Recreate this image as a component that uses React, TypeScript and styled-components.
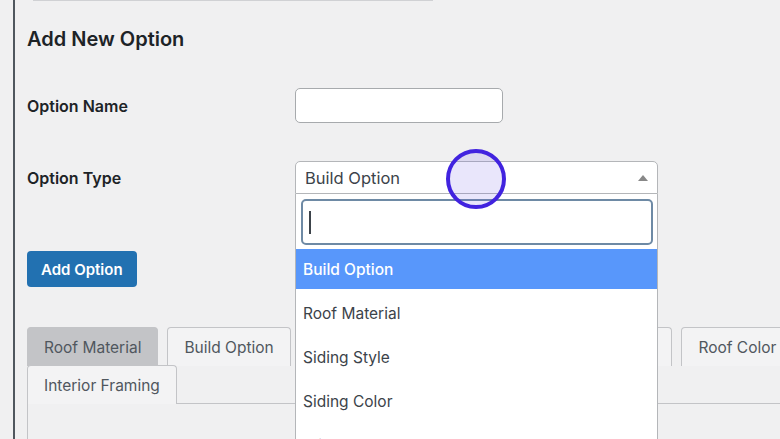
import React from 'react'
import styled, { createGlobalStyle } from 'styled-components'

const GlobalStyle = createGlobalStyle`
  html, body {
    margin: 0;
    padding: 0;
    background: #f0f0f1;
    overflow: hidden;
  }
  body {
    font-family: Inter, 'Noto Sans', 'Liberation Sans', sans-serif;
    color: #1d2327;
  }
`

const Page = styled.div`
  display: flex;
  width: 780px;
  height: 439px;
  overflow: hidden;
`

const LeftRail = styled.div`
  width: 13px;
  flex: none;
  border-right: 2px solid #50575e;
`

const Main = styled.div`
  flex: 1;
  padding-left: 12px;
  min-width: 0;
`

const TopEdge = styled.div`
  width: 400px;
  margin-left: 6px;
  height: 0;
  border-bottom: 1px solid #d0d1d4;
`

const Heading = styled.h2`
  margin: 26px 0 0;
  font-size: 20px;
  line-height: 24px;
  font-weight: 600;
  color: #1d2327;
`

const FormGrid = styled.div`
  display: grid;
  grid-template-columns: 268px 363px;
  row-gap: 38px;
  align-items: center;
  margin-top: 37px;
`

const Label = styled.label`
  font-size: 16px;
  font-weight: 600;
  color: #1d2327;
`

const TextInput = styled.div`
  width: 208px;
  height: 35px;
  box-sizing: border-box;
  background: #fff;
  border: 1px solid #a7aaad;
  border-radius: 5px;
`

const SelectWrap = styled.div`
  position: relative;
  width: 363px;
`

const SelectBox = styled.div`
  height: 33px;
  box-sizing: border-box;
  background: #fff;
  border: 1px solid #b4b6b9;
  border-radius: 5px 5px 0 0;
  display: flex;
  align-items: center;
  justify-content: space-between;
  padding: 0 9px 0 9px;
  font-size: 16.5px;
  color: #3c434a;
`

const Caret = styled.span`
  width: 0;
  height: 0;
  border-left: 5px solid transparent;
  border-right: 5px solid transparent;
  border-bottom: 6px solid #888;
`

const Dropdown = styled.div`
  position: absolute;
  top: 100%;
  left: 0;
  right: 0;
  height: 260px;
  box-sizing: border-box;
  background: #fff;
  border: 1px solid #b4b6b9;
  border-top: none;
  z-index: 5;
`

const SearchBox = styled.div`
  margin: 5px 4px 4px 5px;
  height: 46px;
  box-sizing: border-box;
  border: 2px solid #6e8aa5;
  border-radius: 5px;
  display: flex;
  align-items: center;
  padding-left: 6px;
`

const TextCaret = styled.span`
  width: 1.5px;
  height: 23px;
  background: #3c434a;
`

const OptionList = styled.div`
  display: flex;
  flex-direction: column;
  gap: 4px;
`

const OptionItem = styled.div<{ $active?: boolean }>`
  height: 40px;
  display: flex;
  align-items: center;
  padding-left: 7px;
  font-size: 15.5px;
  color: ${(p) => (p.$active ? '#fff' : '#3c434a')};
  background: ${(p) => (p.$active ? '#5897fb' : 'transparent')};
  font-weight: ${(p) => (p.$active ? 500 : 400)};
`

const PointerRing = styled.div`
  position: absolute;
  left: 151px;
  top: -12px;
  width: 60px;
  height: 60px;
  box-sizing: border-box;
  border-radius: 50%;
  border: 4px solid #4123df;
  background: rgba(96, 80, 225, 0.14);
  z-index: 10;
  pointer-events: none;
`

const PrimaryButton = styled.button`
  margin-top: 57px;
  height: 36px;
  padding: 0 14px;
  border: none;
  border-radius: 4px;
  background: #2271b1;
  color: #fff;
  font-family: inherit;
  font-size: 15px;
  font-weight: 600;
`

const TabRow = styled.div`
  margin-top: 40px;
  width: 800px;
  display: flex;
  flex-wrap: wrap;
  column-gap: 9px;
`

const Tab = styled.div<{ $active?: boolean }>`
  height: 39px;
  box-sizing: border-box;
  display: flex;
  align-items: center;
  padding: 0 16px;
  margin-bottom: -1px;
  font-size: 15.5px;
  color: #50575e;
  border: 1px solid #c3c4c7;
  border-bottom: none;
  border-radius: 4px 4px 0 0;
  background: ${(p) => (p.$active ? '#c3c4c7' : '#f3f3f4')};
  white-space: nowrap;
`

const Panel = styled.div`
  width: 800px;
  height: 80px;
  border-top: 1px solid #c3c4c7;
  border-left: 1px solid #c3c4c7;
  background: #f0f0f1;
`

const options = ['Build Option', 'Roof Material', 'Siding Style', 'Siding Color', 'Trim Color']
const tabs = ['Roof Material', 'Build Option', 'Siding Style', 'Siding Color', 'Trim Color', 'Roof Color', 'Interior Framing']

export default function App() {
  return (
    <>
      <GlobalStyle />
      <Page>
        <LeftRail />
        <Main>
          <TopEdge />
          <Heading>Add New Option</Heading>
          <FormGrid>
            <Label>Option Name</Label>
            <TextInput />
            <Label>Option Type</Label>
            <SelectWrap>
              <SelectBox>
                <span>Build Option</span>
                <Caret />
              </SelectBox>
              <Dropdown>
                <SearchBox>
                  <TextCaret />
                </SearchBox>
                <OptionList>
                  {options.map((o, i) => (
                    <OptionItem key={o} $active={i === 0}>
                      {o}
                    </OptionItem>
                  ))}
                </OptionList>
              </Dropdown>
              <PointerRing />
            </SelectWrap>
          </FormGrid>
          <PrimaryButton>Add Option</PrimaryButton>
          <TabRow>
            {tabs.map((t, i) => (
              <Tab key={t} $active={i === 0}>
                {t}
              </Tab>
            ))}
          </TabRow>
          <Panel />
        </Main>
      </Page>
    </>
  )
}
